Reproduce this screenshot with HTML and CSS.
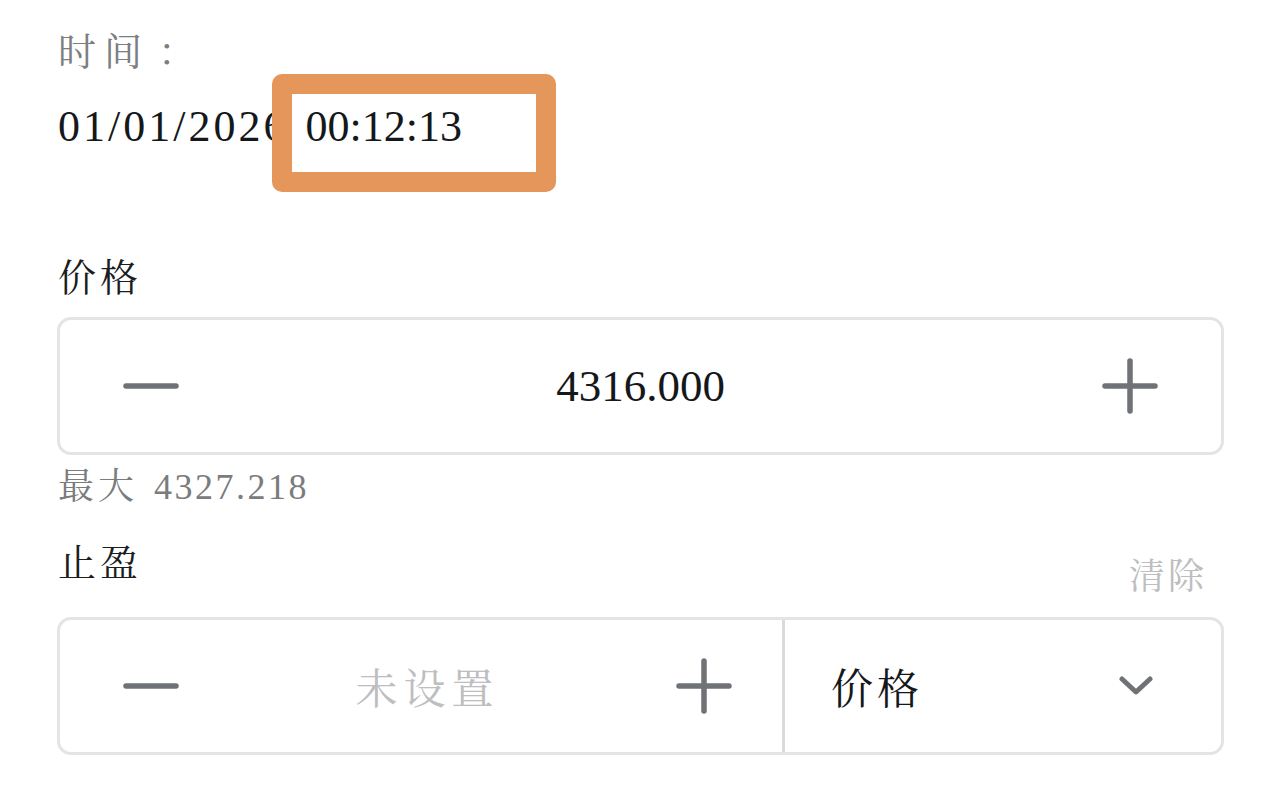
FILE: index.html
```html
<!DOCTYPE html>
<html lang="zh-CN">
<head>
<meta charset="utf-8">
<title>订单</title>
<link rel="stylesheet" href="styles.css">
</head>
<body>
<div class="page">
  <div class="label muted">时间<span class="colon">：</span></div>
  <div class="datetime">
    <span class="date">01/01/2026</span>
    <span class="time">00:12:13<span class="highlight"></span></span>
  </div>

  <div class="label price-label">价格</div>
  <div class="stepper">
    <button class="icon-btn" type="button" aria-label="减少">
      <svg viewBox="0 0 56 56" width="56" height="56"><path d="M3 28H53" /></svg>
    </button>
    <div class="value">4316.000</div>
    <button class="icon-btn" type="button" aria-label="增加">
      <svg viewBox="0 0 56 56" width="56" height="56"><path d="M3 28H53M28 3V53" /></svg>
    </button>
  </div>
  <div class="hint">最大<span class="hint-num">4327.218</span></div>

  <div class="row-head">
    <div class="label">止盈</div>
    <div class="clear">清除</div>
  </div>
  <div class="stepper split">
    <div class="seg-left">
      <button class="icon-btn" type="button" aria-label="减少">
        <svg viewBox="0 0 56 56" width="56" height="56"><path d="M3 28H53" /></svg>
      </button>
      <div class="value placeholder">未设置</div>
      <button class="icon-btn" type="button" aria-label="增加">
        <svg viewBox="0 0 56 56" width="56" height="56"><path d="M3 28H53M28 3V53" /></svg>
      </button>
    </div>
    <div class="divider"></div>
    <div class="seg-right">
      <span class="select-text">价格</span>
      <svg class="chev" viewBox="0 0 34 20" width="34" height="20"><path d="M3 3L17 16L31 3" /></svg>
    </div>
  </div>
</div>
</body>
</html>
```

FILE: styles.css
```css
* { box-sizing: border-box; }

html, body {
  margin: 0;
  padding: 0;
  background: #ffffff;
}

body {
  font-family: "Liberation Serif", "Noto Serif CJK SC", "Noto Sans CJK SC", serif;
  color: #1b1d1f;
}

.page {
  width: 1280px;
  height: 796px;
  overflow: hidden;
  padding: 24px 57px 0 58px;
}

.label {
  height: 50px;
  font-family: "Noto Serif CJK SC", "Noto Sans CJK SC", sans-serif;
  font-size: 38px;
  line-height: 50px;
  letter-spacing: 4px;
  color: #1b1d1f;
}

.label.muted {
  color: #7c7e80;
  letter-spacing: 8px;
}

.colon {
  margin-left: 8px;
}

.datetime {
  margin-top: 28px;
  display: flex;
  align-items: center;
  height: 50px;
  font-size: 44px;
  line-height: 50px;
  color: #15181a;
}

.date {
  position: relative;
  z-index: 0;
  letter-spacing: 3px;
}

.time {
  position: relative;
  z-index: 1;
  margin-left: 17px;
}

.highlight {
  position: absolute;
  left: -33px;
  top: -28px;
  width: 284px;
  height: 118px;
  border: 20px solid #e5975b;
  border-radius: 10px;
  pointer-events: none;
}

.price-label {
  margin-top: 98px;
}

.stepper {
  margin: 17px -1px 0 -1px;
  height: 138px;
  border: 3px solid #e3e4e5;
  border-radius: 14px;
  display: flex;
  align-items: center;
  padding: 0 63px;
}

.icon-btn {
  flex: 0 0 56px;
  width: 56px;
  height: 56px;
  padding: 0;
  margin: 0;
  border: 0;
  background: none;
  display: flex;
}

.icon-btn svg path {
  stroke: #6f7276;
  stroke-width: 5.5;
  stroke-linecap: round;
  fill: none;
}

.value {
  flex: 1 1 auto;
  text-align: center;
  font-size: 45px;
  line-height: 56px;
  color: #15181a;
}

.value.placeholder {
  font-family: "Noto Serif CJK SC", "Noto Sans CJK SC", sans-serif;
  font-size: 42px;
  letter-spacing: 6px;
  color: #bdbebf;
}

.hint {
  margin-top: 9px;
  height: 40px;
  font-family: "Noto Serif CJK SC", "Noto Sans CJK SC", sans-serif;
  font-size: 36px;
  line-height: 40px;
  letter-spacing: 4px;
  color: #7a7c7e;
  white-space: nowrap;
}

.hint-num {
  margin-left: 16px;
  font-family: "Liberation Serif", serif;
  letter-spacing: 2.5px;
}

.row-head {
  margin-top: 31px;
  display: flex;
  justify-content: space-between;
  align-items: flex-start;
  height: 64px;
}

.clear {
  margin-top: 14px;
  margin-right: 16px;
  font-family: "Noto Serif CJK SC", "Noto Sans CJK SC", sans-serif;
  font-size: 36px;
  line-height: 50px;
  letter-spacing: 3px;
  color: #bdbebf;
}

.stepper.split {
  margin-top: 18px;
  padding: 0;
  align-items: stretch;
}

.seg-left {
  flex: 0 0 722px;
  display: flex;
  align-items: center;
  padding: 0 50px 0 63px;
}

.divider {
  flex: 0 0 3px;
  background: #d9dadb;
}

.seg-right {
  flex: 1 1 auto;
  display: flex;
  align-items: center;
  justify-content: space-between;
  padding: 0 68px 0 46px;
}

.select-text {
  font-family: "Noto Serif CJK SC", "Noto Sans CJK SC", sans-serif;
  font-size: 42px;
  line-height: 56px;
  letter-spacing: 4px;
  color: #15181a;
}

.chev path {
  stroke: #6f7276;
  stroke-width: 5;
  stroke-linecap: round;
  stroke-linejoin: round;
  fill: none;
}
```
